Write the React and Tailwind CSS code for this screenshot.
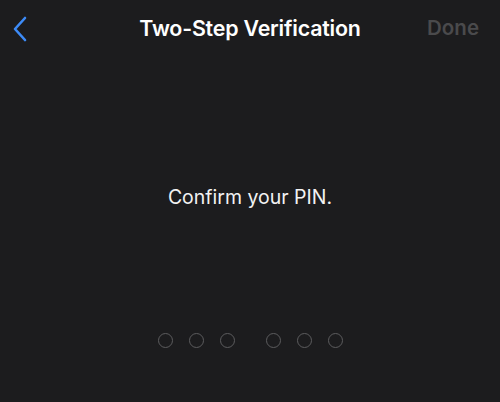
export default function App() {
  const dot = "w-[15px] h-[15px] rounded-full border-[1.5px] border-[#5c5c5e]";
  return (
    <div className="w-[500px] h-[402px] bg-[#1c1c1e] flex flex-col" style={{ fontFamily: "Inter, 'Noto Sans', sans-serif" }}>
      <div className="h-[56px] flex items-center justify-between px-[12px] relative">
        <svg width="16" height="26" viewBox="0 0 16 26" fill="none" className="mt-[1px]">
          <path d="M13 2 L3 13 L13 24" stroke="#3d8bf7" strokeWidth="2.6" strokeLinecap="round" strokeLinejoin="round" />
        </svg>
        <div className="absolute left-0 right-0 text-center text-white font-semibold text-[21.4px] tracking-[-0.2px] pointer-events-none">Two-Step Verification</div>
        <div className="text-[#4a4a4c] text-[20.5px] font-semibold mr-[9px]">Done</div>
      </div>
      <div className="flex-1 flex flex-col items-center">
        <div className="mt-[127px] text-[#f2f2f2] text-[19.5px]">Confirm your PIN.</div>
        <div className="mt-[121px] flex items-center gap-[31px]">
          <div className="flex gap-[16px]"><div className={dot} /><div className={dot} /><div className={dot} /></div>
          <div className="flex gap-[16px]"><div className={dot} /><div className={dot} /><div className={dot} /></div>
        </div>
      </div>
    </div>
  );
}
